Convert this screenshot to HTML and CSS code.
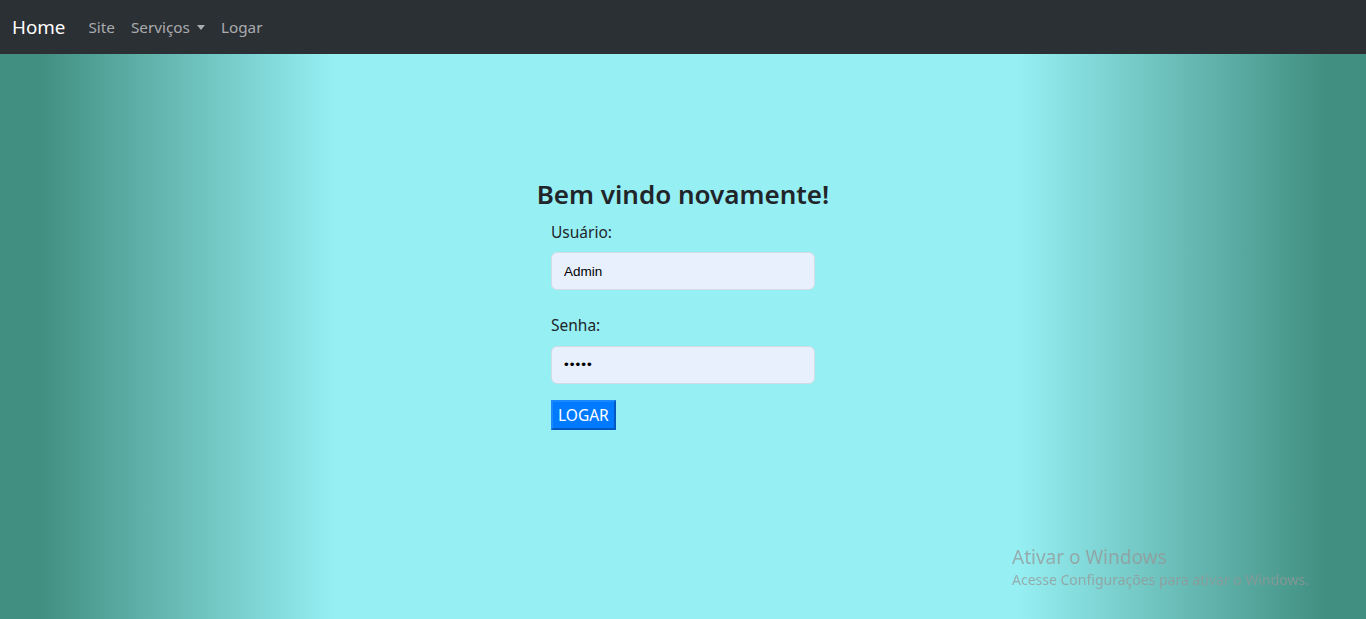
FILE: index.html
```html
<!DOCTYPE html>
<html lang="pt-BR">
<head>
<meta charset="utf-8">
<title>Login</title>
<link rel="stylesheet" href="styles.css">
</head>
<body>
<nav class="navbar">
  <a class="brand" href="#">Home</a>
  <ul class="nav-links">
    <li><a href="#">Site</a></li>
    <li><a href="#" class="dropdown">Serviços<span class="caret"></span></a></li>
    <li><a href="#">Logar</a></li>
  </ul>
</nav>
<main class="page">
  <section class="login">
    <h1 class="title">Bem vindo novamente!</h1>
    <form class="form">
      <label class="label" for="user">Usuário:</label>
      <input class="field" id="user" type="text" value="Admin">
      <label class="label label-gap" for="pass">Senha:</label>
      <input class="field field-pass" id="pass" type="password" value="admin">
      <button class="btn" type="button">LOGAR</button>
    </form>
  </section>
</main>
<div class="watermark">
  <div class="wm-title">Ativar o Windows</div>
  <div class="wm-sub">Acesse Configurações para ativar o Windows.</div>
</div>
</body>
</html>
```
FILE: styles.css
```css
* { box-sizing: border-box; }
html, body { margin: 0; height: 100%; }
body {
  font-family: "Noto Sans", "Open Sans", sans-serif;
  font-size: 16px;
  line-height: 1.5;
  color: #212529;
  display: flex;
  flex-direction: column;
  overflow: hidden;
}
.navbar {
  height: 54px;
  background: #2b3035;
  display: flex;
  align-items: center;
  padding: 0 12px;
  flex: none;
}
.brand {
  color: #fff;
  font-size: 18.8px;
  text-decoration: none;
  margin-right: 15px;
}
.nav-links {
  list-style: none;
  display: flex;
  margin: 0;
  padding: 0;
}
.nav-links a {
  display: flex;
  align-items: center;
  color: rgba(255,255,255,0.6);
  text-decoration: none;
  padding: 8px 8px;
  font-size: 15.3px;
}
.caret {
  display: inline-block;
  margin-left: 7px;
  border-top: 5px solid rgba(255,255,255,0.6);
  border-left: 4.5px solid transparent;
  border-right: 4.5px solid transparent;
  margin-top: 1px;
}
.page {
  flex: 1;
  background: linear-gradient(to right,
    #418f81 0%, #418f81 3%, #96eff3 24.5%,
    #96eff3 74.5%, #418f81 97%, #418f81 100%);
  display: flex;
  justify-content: center;
  padding-top: 125px;
}
.login {
  display: flex;
  flex-direction: column;
  align-items: center;
}
.title {
  margin: 0 0 11px;
  font-size: 26px;
  font-weight: 600;
  line-height: 1.2;
  color: #212529;
}
.form {
  width: 264px;
  display: flex;
  flex-direction: column;
  align-items: flex-start;
}
.label {
  margin-bottom: 8px;
  color: #212529;
  font-size: 15.5px;
}
.label-gap { margin-top: 24px; }
.field {
  width: 100%;
  height: 38px;
  border: 1px solid #d3dbe4;
  border-radius: 6px;
  background: #e8f0fe;
  padding: 0 12px;
  font-family: "Liberation Sans", Arial, sans-serif;
  font-size: 13.5px;
  color: #000;
}
.field-pass { letter-spacing: 1px; }
.btn {
  margin-top: 16px;
  height: 30px;
  padding: 0 5px;
  background: #007bff;
  color: #fff;
  font-family: "Noto Sans", "Open Sans", sans-serif;
  font-size: 15.5px;
  border: 2px solid;
  border-color: #1a88ff #0058c0 #0058c0 #1a88ff;
}
.watermark {
  position: fixed;
  left: 1012px;
  top: 543px;
  color: rgba(150,150,150,0.75);
  font-family: "Noto Sans", "Open Sans", sans-serif;
  pointer-events: none;
}
.wm-title { font-size: 19px; line-height: 28px; }
.wm-sub { font-size: 14px; line-height: 18px; }
```
